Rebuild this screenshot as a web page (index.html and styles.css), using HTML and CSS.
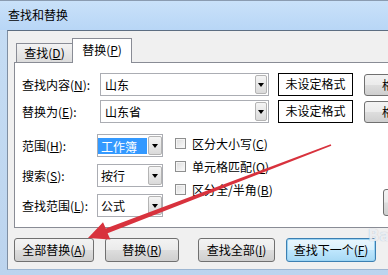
FILE: index.html
```html
<!DOCTYPE html>
<html lang="zh-CN">
<head>
<meta charset="utf-8">
<title>查找和替换</title>
<link rel="stylesheet" href="styles.css">
</head>
<body>
<div class="window">
  <div class="titlebar">查找和替换</div>
  <div class="frame">
    <div class="client">
      <div class="tabs">
        <div class="tab">查找(<u>D</u>)</div>
        <div class="tab active">替换(<u>P</u>)</div>
      </div>
      <div class="panel">
        <div class="row">
          <span class="label wide-label">查找内容(<u>N</u>):</span>
          <div class="combo wide"><span class="val">山东</span><span class="drop"></span></div>
          <div class="fmt">未设定格式</div>
          <div class="btn fmtbtn">格式(M) ▾</div>
        </div>
        <div class="row row2">
          <span class="label wide-label">替换为(<u>E</u>):</span>
          <div class="combo wide"><span class="val">山东省</span><span class="drop"></span></div>
          <div class="fmt">未设定格式</div>
          <div class="btn fmtbtn">格式(M) ▾</div>
        </div>
        <div class="lower">
          <div class="col1">
            <div class="row">
              <span class="label short-label">范围(<u>H</u>):</span>
              <div class="combo small"><span class="val sel">工作簿</span><span class="drop"></span></div>
            </div>
            <div class="row">
              <span class="label short-label">搜索(<u>S</u>):</span>
              <div class="combo small"><span class="val">按行</span><span class="drop"></span></div>
            </div>
            <div class="row">
              <span class="label short-label">查找范围(<u>L</u>):</span>
              <div class="combo small"><span class="val">公式</span><span class="drop"></span></div>
            </div>
          </div>
          <div class="checks">
            <div class="check"><span class="box"></span><span>区分大小写(<u>C</u>)</span></div>
            <div class="check"><span class="box"></span><span>单元格匹配(<u>O</u>)</span></div>
            <div class="check"><span class="box"></span><span>区分全/半角(<u>B</u>)</span></div>
          </div>
          <div class="btn optbtn">选项(T) &lt;&lt;</div>
        </div>
      </div>
      <div class="buttons">
        <div class="btn b1">全部替换(<u>A</u>)</div>
        <div class="btn b2">替换(<u>R</u>)</div>
        <div class="btn b3">查找全部(<u>I</u>)</div>
        <div class="btn b4 default">查找下一个(<u>F</u>)</div>
      </div>
    </div>
  </div>
  <div class="watermark">Bai</div>
  <svg class="arrow" width="388" height="275" viewBox="0 0 388 275">
    <polygon points="331.3,145.8 107.6,233.2 110.4,239.6 88,238 103,222.2 105.8,228.6 330.7,144.2" fill="#d8323d"/>
  </svg>
</div>
</body>
</html>
```

FILE: styles.css
```css
* { box-sizing: border-box; }

body {
  margin: 0;
  width: 388px;
  height: 275px;
  overflow: hidden;
  background: #c3daf1;
  font-family: "Noto Sans CJK SC", "Microsoft YaHei", sans-serif;
  font-size: 12px;
  color: #000;
}

u { text-decoration: underline; text-underline-offset: 1px; }

.window {
  position: relative;
  width: 420px;
  height: 275px;
  background: linear-gradient(#c6ddf4, #bcd4ee);
  border-top: 1px solid #8a9bb0;
}

.titlebar {
  height: 29px;
  padding-left: 8px;
  line-height: 28px;
  font-size: 12px;
  background: linear-gradient(#c9e1f9, #b8d6f6);
}

.frame {
  padding-left: 7px;
}

.client {
  height: 240px;
  border-top: 1px solid #5d6e82;
  border-left: 1px solid #7f8fa3;
  border-bottom: 1px solid #9db6d2;
  background: #f0f0f0;
  padding: 7px 0 0 6px;
}

.tabs {
  display: flex;
  align-items: flex-end;
  height: 24px;
}

.tab {
  flex-shrink: 0;
  height: 19px;
  border: 1px solid #898c95;
  border-bottom: none;
  background: linear-gradient(#f3f3f3, #dcdcdc);
  text-align: center;
  line-height: 17px;
}

.tab:first-child {
  margin-left: 2px;
  width: 56px;
  border-right: none;
}

.tab.active {
  position: relative;
  z-index: 1;
  width: 60px;
  height: 25px;
  margin-bottom: -1px;
  background: #fff;
  line-height: 22px;
}

.panel {
  width: 400px;
  height: 166px;
  border: 1px solid #898c95;
  background: #fff;
  padding: 10px 0 0 7px;
}

.row {
  display: flex;
  align-items: center;
  height: 23px;
}

.row > *, .lower > *, .buttons > * { flex-shrink: 0; }

.row2 { margin-top: 4px; }

.label { white-space: nowrap; }
.wide-label { width: 78px; }
.short-label { width: 75px; }

.combo {
  display: flex;
  align-items: center;
  justify-content: space-between;
  height: 23px;
  border: 1px solid #abadb3;
  background: #fff;
  padding-left: 4px;
}

.combo.wide { width: 169px; }
.combo.small { width: 66px; padding-left: 0; }
.combo.small .val { padding-left: 3px; }

.val { white-space: nowrap; line-height: 17px; }

.val.sel {
  background: #3399ff;
  color: #fff;
  width: 49px;
  height: 16px;
}

.drop {
  flex-shrink: 0;
  width: 12px;
  height: 19px;
  margin-right: 1px;
  border: 1px solid #b4b4b4;
  border-radius: 2px;
  background: linear-gradient(#f5f5f5, #dadada);
  display: flex;
  align-items: center;
  justify-content: center;
}

.combo.small .drop { width: 14px; margin-right: 0; }

.drop::after {
  content: "";
  border-left: 3.5px solid transparent;
  border-right: 3.5px solid transparent;
  border-top: 4px solid #000;
}

.fmt {
  margin-left: 9px;
  width: 75px;
  height: 23px;
  border: 1px solid #000;
  background: #fff;
  text-align: center;
  line-height: 20px;
}

.btn {
  height: 24px;
  border: 1px solid #707070;
  border-radius: 3px;
  background: linear-gradient(#f3f3f3 0%, #ebebeb 48%, #dddddd 52%, #cfcfcf 100%);
  text-align: center;
  line-height: 21px;
  white-space: nowrap;
}

.fmtbtn {
  margin-left: 11px;
  width: 80px;
  height: 22px;
  text-align: left;
  padding-left: 17px;
  line-height: 19px;
}

.lower {
  display: flex;
  margin-top: 11px;
}

.col1 {
  display: flex;
  flex-direction: column;
  gap: 7px;
}

.checks {
  margin-left: 12px;
  margin-top: -2px;
  width: 208px;
  display: flex;
  flex-direction: column;
}

.check {
  display: flex;
  align-items: center;
  height: 23px;
}

.box {
  flex-shrink: 0;
  width: 11px;
  height: 11px;
  border: 1px solid #8e8f8f;
  background: linear-gradient(135deg, #dcdcdc, #fbfbfb);
  margin-right: 6px;
  box-shadow: inset 0 0 0 1px #f4f4f4;
}

.optbtn {
  align-self: flex-end;
  margin-bottom: 1px;
  width: 60px;
  height: 27px;
  text-align: left;
  padding-left: 9px;
  line-height: 24px;
}

.buttons {
  display: flex;
  margin-top: 10px;
}

.b1 { width: 80px; }
.b2 { width: 74px; margin-left: 11px; }
.b3 { width: 77px; margin-left: 19px; }
.b4 { width: 90px; margin-left: 11px; }

.btn.default {
  border-color: #3c7fb1;
  background: linear-gradient(#eaf6fd 0%, #d9f0fc 48%, #bee6fd 52%, #a7d9f5 100%);
  box-shadow: inset 0 0 0 1px #9ad3f3;
}

.watermark {
  position: absolute;
  left: 368px;
  top: 226px;
  font-family: "DejaVu Sans", sans-serif;
  font-size: 15px;
  font-weight: bold;
  color: rgba(255, 255, 255, 0.75);
  text-shadow: 0 0 1px rgba(120, 140, 170, 0.6);
}

.arrow {
  position: absolute;
  left: 0;
  top: -1px;
  pointer-events: none;
}
```
